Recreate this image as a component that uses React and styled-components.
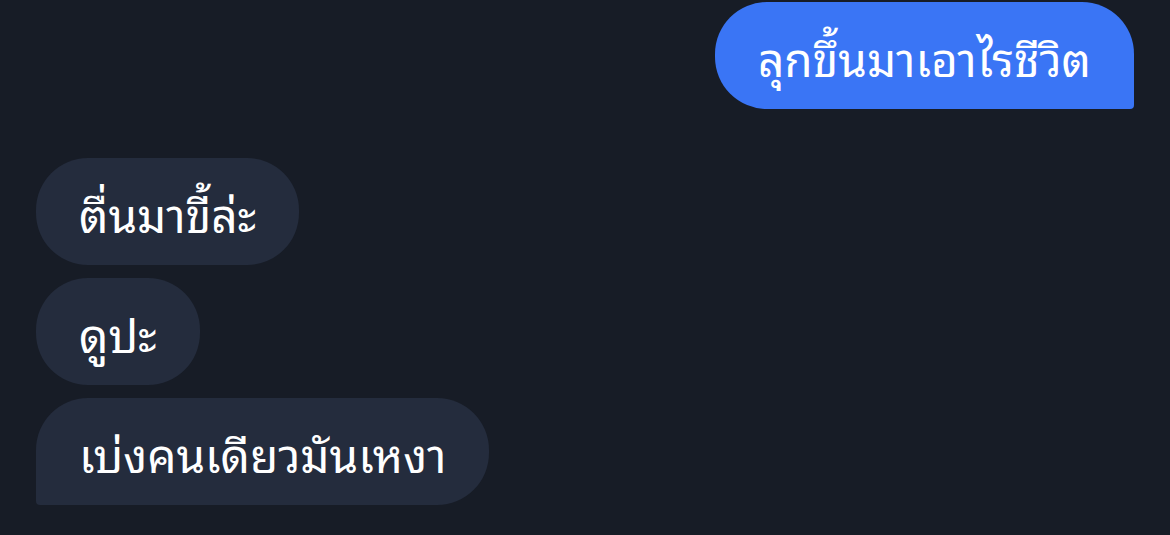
import React from 'react';
import styled, { createGlobalStyle } from 'styled-components';

const GlobalStyle = createGlobalStyle`
    html, body {
        margin: 0;
        padding: 0;
        background: #171c26;
    }
    body {
        font-family: "Noto Sans Thai Looped", "Garuda", "Loma", "Noto Sans", "Noto Sans Thai", "Liberation Sans", sans-serif;
    }
`

const Chat = styled.div`
    width: 1170px;
    height: 535px;
    box-sizing: border-box;
    padding: 2px 36px 0 36px;
    display: flex;
    flex-direction: column;
    overflow: hidden;
`

const Group = styled.div`
    display: flex;
    flex-direction: column;
    align-items: ${({ $mine }) => ($mine ? 'flex-end' : 'flex-start')};
    gap: 13px;
    margin-bottom: ${({ $mine }) => ($mine ? '49px' : '0')};
`

const Bubble = styled.div`
    box-sizing: border-box;
    height: 107px;
    padding: 0 43px;
    display: flex;
    align-items: center;
    font-size: 46px;
    color: #ffffff;
    white-space: nowrap;
    background: ${({ $mine }) => ($mine ? '#3a75f5' : '#242c3d')};
    border-radius: 52px;
    ${({ $tail, $mine }) =>
        $tail && ($mine ? 'border-bottom-right-radius: 4px;' : 'border-bottom-left-radius: 4px;')}
`

const App = () => {
    return (
        <>
            <GlobalStyle />
            <Chat>
                <Group $mine>
                    <Bubble $mine $tail>ลุกขึ้นมาเอาไรชีวิต</Bubble>
                </Group>
                <Group>
                    <Bubble>ตื่นมาขี้ล่ะ</Bubble>
                    <Bubble>ดูปะ</Bubble>
                    <Bubble $tail>เบ่งคนเดียวมันเหงา</Bubble>
                </Group>
            </Chat>
        </>
    );
}

export default App;
